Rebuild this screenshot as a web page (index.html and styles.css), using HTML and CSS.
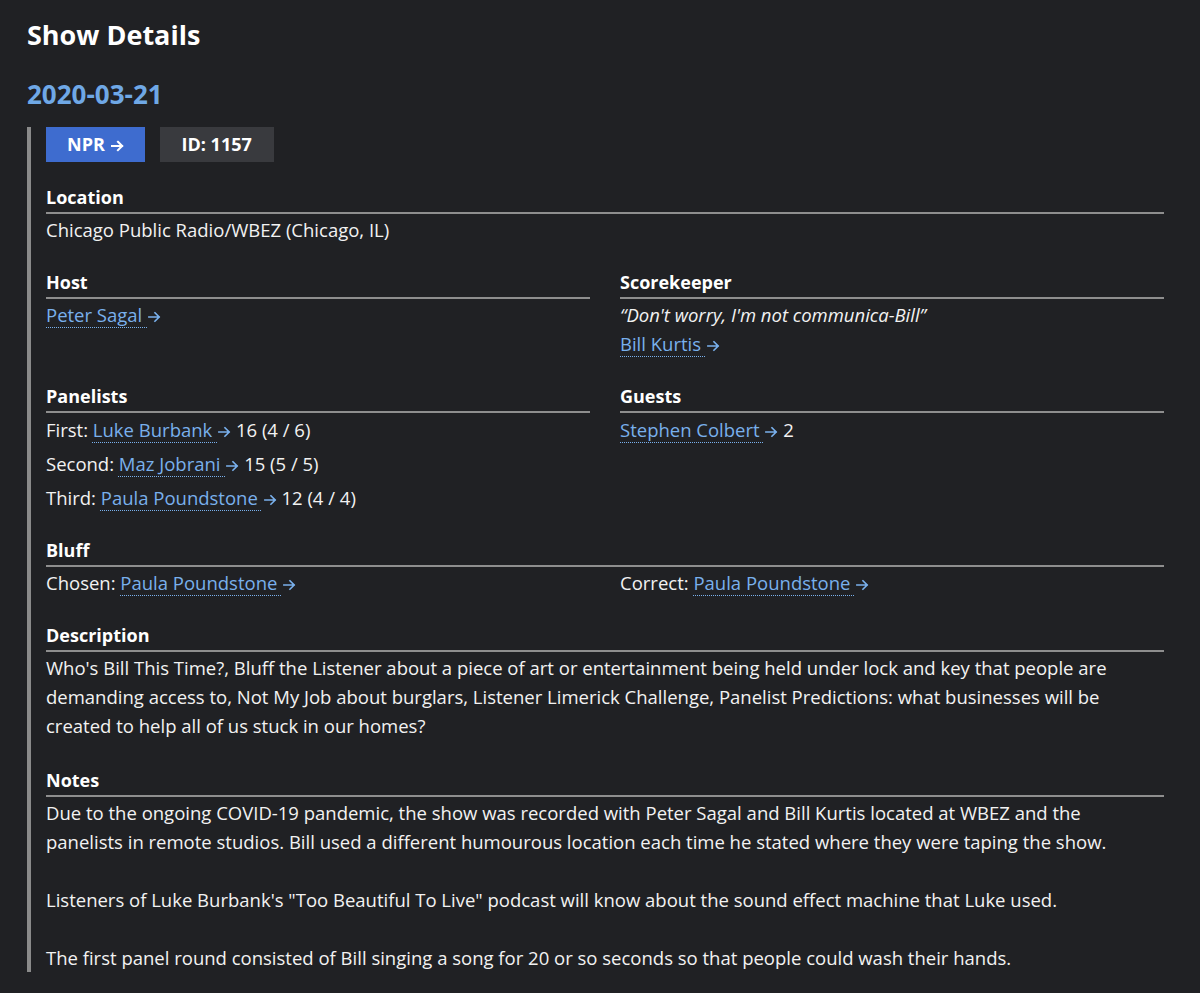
FILE: index.html
```html
<!DOCTYPE html>
<html lang="en">
<head>
<meta charset="utf-8">
<title>Show Details</title>
<link rel="stylesheet" href="styles.css">
</head>
<body>
<h1 class="page-title">Show Details</h1>
<h2 class="show-date"><a href="#">2020-03-21</a></h2>
<div class="show-box">
  <div class="badges">
    <a class="badge badge-npr" href="#">NPR <svg class="arr" viewBox="0 0 14 12" aria-hidden="true"><path d="M1 6h11M7.5 1.5L12 6l-4.5 4.5"/></svg></a>
    <span class="badge badge-id">ID: 1157</span>
  </div>

  <section class="block">
    <h3 class="block-title">Location</h3>
    <div class="line">Chicago Public Radio/WBEZ (Chicago, IL)</div>
  </section>

  <div class="two-col">
    <section class="block">
      <h3 class="block-title">Host</h3>
      <div class="line"><a class="lnk" href="#">Peter Sagal <svg class="arr" viewBox="0 0 14 12" aria-hidden="true"><path d="M1 6h11M7.5 1.5L12 6l-4.5 4.5"/></svg></a></div>
    </section>
    <section class="block">
      <h3 class="block-title">Scorekeeper</h3>
      <div class="line quote">“Don't worry, I'm not communica-Bill”</div>
      <div class="line"><a class="lnk" href="#">Bill Kurtis <svg class="arr" viewBox="0 0 14 12" aria-hidden="true"><path d="M1 6h11M7.5 1.5L12 6l-4.5 4.5"/></svg></a></div>
    </section>
  </div>

  <div class="two-col">
    <section class="block">
      <h3 class="block-title">Panelists</h3>
      <ul class="rows">
        <li>First: <a class="lnk" href="#">Luke Burbank <svg class="arr" viewBox="0 0 14 12" aria-hidden="true"><path d="M1 6h11M7.5 1.5L12 6l-4.5 4.5"/></svg></a> 16 (4 / 6)</li>
        <li>Second: <a class="lnk" href="#">Maz Jobrani <svg class="arr" viewBox="0 0 14 12" aria-hidden="true"><path d="M1 6h11M7.5 1.5L12 6l-4.5 4.5"/></svg></a> 15 (5 / 5)</li>
        <li>Third: <a class="lnk" href="#">Paula Poundstone <svg class="arr" viewBox="0 0 14 12" aria-hidden="true"><path d="M1 6h11M7.5 1.5L12 6l-4.5 4.5"/></svg></a> 12 (4 / 4)</li>
      </ul>
    </section>
    <section class="block">
      <h3 class="block-title">Guests</h3>
      <ul class="rows">
        <li><a class="lnk" href="#">Stephen Colbert <svg class="arr" viewBox="0 0 14 12" aria-hidden="true"><path d="M1 6h11M7.5 1.5L12 6l-4.5 4.5"/></svg></a> 2</li>
      </ul>
    </section>
  </div>

  <section class="block">
    <h3 class="block-title">Bluff</h3>
    <div class="bluff">
      <div class="line">Chosen: <a class="lnk" href="#">Paula Poundstone <svg class="arr" viewBox="0 0 14 12" aria-hidden="true"><path d="M1 6h11M7.5 1.5L12 6l-4.5 4.5"/></svg></a></div>
      <div class="line">Correct: <a class="lnk" href="#">Paula Poundstone <svg class="arr" viewBox="0 0 14 12" aria-hidden="true"><path d="M1 6h11M7.5 1.5L12 6l-4.5 4.5"/></svg></a></div>
    </div>
  </section>

  <section class="block">
    <h3 class="block-title">Description</h3>
    <p class="para">Who's Bill This Time?, Bluff the Listener about a piece of art or entertainment being held under lock and key that people are demanding access to, Not My Job about burglars, Listener Limerick Challenge, Panelist Predictions: what businesses will be created to help all of us stuck in our homes?</p>
  </section>

  <section class="block block-last">
    <h3 class="block-title">Notes</h3>
    <p class="para">Due to the ongoing COVID-19 pandemic, the show was recorded with Peter Sagal and Bill Kurtis located at WBEZ and the panelists in remote studios. Bill used a different humourous location each time he stated where they were taping the show.</p>
    <p class="para">Listeners of Luke Burbank's "Too Beautiful To Live" podcast will know about the sound effect machine that Luke used.</p>
    <p class="para">The first panel round consisted of Bill singing a song for 20 or so seconds so that people could wash their hands.</p>
  </section>
</div>
</body>
</html>
```

FILE: styles.css
```css
html, body {
  background: #202124;
}
body {
  margin: 0;
  padding: 0 36px 0 27px;
  color: #f2f2f2;
  font-family: "Open Sans", "Noto Sans", "Liberation Sans", sans-serif;
  font-size: 18.5px;
  line-height: 29px;
}
a {
  color: #79b0ec;
  text-decoration: none;
}
.arr {
  display: inline-block;
  width: 13px;
  height: 12px;
  margin-left: 1px;
  vertical-align: -0.5px;
  fill: none;
  stroke: currentColor;
  stroke-width: 1.8;
  stroke-linecap: square;
}
.page-title {
  margin: 19px 0 0;
  font-size: 27px;
  line-height: 32px;
  font-weight: 700;
  color: #ffffff;
}
.show-date {
  margin: 28px 0 0;
  font-size: 26px;
  line-height: 30px;
  font-weight: 700;
}
.show-date a {
  color: #6fa8e6;
}
.show-box {
  margin-top: 21px;
  border-left: 4px solid #8a8a8a;
  padding-left: 15px;
}
.badges {
  display: flex;
  gap: 15px;
  margin-top: -3px;
}
.badge {
  display: inline-block;
  height: 35px;
  line-height: 35px;
  padding: 0 22px;
  font-weight: 700;
  font-size: 18px;
  color: #ffffff;
}
.badge .arr {
  stroke-width: 2.2;
}
.badge-npr {
  background: #3e6ccf;
  color: #ffffff;
  padding: 0 21px;
}
.badge-id {
  background: #393a3e;
}
.block {
  margin-top: 27px;
}
.badges + .block {
  margin-top: 24px;
}
.two-col {
  display: grid;
  grid-template-columns: 1fr 1fr;
  column-gap: 30px;
}
.two-col .block {
  margin-top: 27px;
}
.block-title {
  margin: 0;
  font-size: 18px;
  line-height: 23px;
  font-weight: 700;
  color: #ffffff;
  padding-bottom: 3px;
  border-bottom: 2px solid #8e8e8e;
  margin-bottom: 1px;
}
.line {
  line-height: 29px;
}
.quote {
  font-style: italic;
}
.lnk {
  text-decoration: underline dotted;
  text-decoration-thickness: 1px;
  text-underline-offset: 5px;
}
.rows {
  list-style: none;
  margin: 0;
  padding: 0;
}
.rows li {
  line-height: 29px;
  margin-top: 5px;
}
.rows li:first-child {
  margin-top: 2px;
}
.bluff {
  display: grid;
  grid-template-columns: 1fr 1fr;
  column-gap: 30px;
}
.para {
  margin: 0 0 29px;
  padding-right: 8px;
}
.block-last .para:last-child {
  margin-bottom: 0;
}
```
